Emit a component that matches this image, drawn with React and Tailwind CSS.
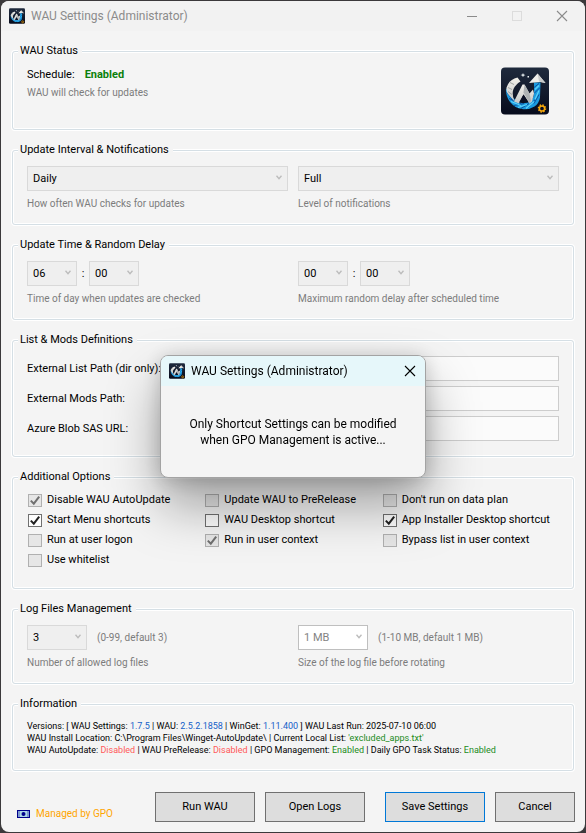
import React from "react";

function Logo({ className }) {
  return (
    <svg viewBox="0 0 48 47" className={className} aria-hidden="true">
      <defs>
        <linearGradient id="logoBg" x1="0" y1="0" x2="0" y2="1">
          <stop offset="0" stopColor="#1f2a3d" />
          <stop offset="1" stopColor="#070b1c" />
        </linearGradient>
        <linearGradient id="logoSilver" x1="0" y1="0" x2="0" y2="1">
          <stop offset="0" stopColor="#f1efea" />
          <stop offset="1" stopColor="#c6c8c8" />
        </linearGradient>
      </defs>
      <rect width="48" height="47" rx="4" fill="url(#logoBg)" />
      <path d="M33 15 L39.500 15 L39 30 Q38 36 33.500 39 Q28 42.500 21 41.500 Q14 40.500 9.500 35 Q4.500 29 5 21 L9 26 Q13 33 19 35 Q25 37 30 33 Q33 30 33 24 Z" fill="#1b9be0" />
      <path d="M6 25 L13 34 M8 31 L20 36 M13 38 L23 36 M20 41 L28 36 M27 40 L35 31 M33 36 L38 27 M33 26 L39 20 M33 20 L38 16" stroke="#0b4f9c" strokeWidth="1" fill="none" />
      <path d="M6 22 L12 31 M10 34 L20 38 M17 40 L26 37 M25 41 L33 34 M34 32 L38 23 M34 22 L38 18" stroke="#5cd3fa" strokeWidth="1.200" fill="none" />
      <path d="M16.500 10 Q8 12 5.500 20 Q5 24 7 26.500 L13.500 34 Q10.500 26 12.500 21.500 Q14.500 17 19.500 14 Z" fill="url(#logoSilver)" />
      <path d="M7 20 L11 22 M9 15 L13 17 M7 24 L11 27" stroke="#8d9396" strokeWidth="0.800" />
      <path d="M13 34 L21.500 17 L23.500 17 L28.500 26 L32 22 L33 26 L31 34 L28.500 36 L22.500 27 L18 36 Z" fill="url(#logoSilver)" />
      <path d="M23.500 17 L28.500 26 L30 33 L28.500 36 L22.500 25 Z" fill="#aeb2b4" />
      <path d="M22.500 27 L27.500 35 L18 35 Z" fill="#0a1024" />
      <path d="M36.500 6 L44.500 15.500 L39 14.500 L33.500 15 L28 15.500 Z" fill="#efeeea" />
      <path d="M36.500 6 L44.500 15.500 L38 14 Z" fill="#c9cbca" />
      <path d="M22 5.500 L22.700 7 L24.500 7.500 L22.700 8.200 L22 9.800 L21.300 8.200 L19.500 7.500 L21.300 7 Z M26.500 8.500 h1.500 v1.500 h-1.500 Z" fill="#e9eef0" />
      <circle cx="41" cy="41" r="3.500" fill="none" stroke="#f9a90a" strokeWidth="1.600" strokeDasharray="1.370 1.370" />
      <circle cx="41" cy="41" r="2.600" fill="none" stroke="#f9a90a" strokeWidth="1.500" />
    </svg>
  );
}

function CloseIcon({ className }) {
  return (
    <svg viewBox="0 0 12 12" className={className} fill="none" stroke="currentColor" strokeWidth="1.100" aria-hidden="true">
      <path d="M1 1 L11 11 M11 1 L1 11" />
    </svg>
  );
}

function Group({ title, className, children }) {
  return (
    <fieldset
      className={`min-w-0 rounded-[3px] border border-[#d5dfe5] px-[14px] shadow-[0_0_0_1px_#ffffff,inset_0_0_0_1px_#ffffff] ${className}`}
    >
      <legend className="-ml-[9px] h-4 bg-[#f4f4f4] pr-1 pl-[2px] leading-4">{title}</legend>
      {children}
    </fieldset>
  );
}

function Select({ label, value, className, active }) {
  return (
    <div className={`relative h-[25px] ${className}`}>
      <select
        aria-label={label}
        disabled
        defaultValue={value}
        className={`h-full w-full appearance-none border pl-[5px] leading-4 opacity-100 ${
          active ? "border-[#bfbfbf] bg-white text-[#838383]" : "border-[#d9d9d9] bg-[#efefef] text-black"
        }`}
      >
        <option>{value}</option>
      </select>
      <svg
        viewBox="0 0 6 5"
        className="pointer-events-none absolute top-[9px] right-[6px] h-[5px] w-[6px]"
        fill="none"
        stroke="#bcbcbc"
        strokeWidth="1.400"
        aria-hidden="true"
      >
        <path d="M0.500 0.700 L3 3.600 L5.500 0.700" />
      </svg>
    </div>
  );
}

function Hint({ children }) {
  return <p className="text-[10px] leading-[14px] text-[#7c7c7c]">{children}</p>;
}

function Check({ label, checked, enabled }) {
  return (
    <label className="flex h-5 items-center gap-[5px] pl-px whitespace-nowrap">
      <span className="relative h-[13px] w-[14px] shrink-0">
        <input
          type="checkbox"
          defaultChecked={checked}
          disabled={!enabled}
          className={`block h-full w-full appearance-none border ${
            enabled ? "border-[#707070] bg-white/80" : "border-[#6f6f6f]/45 bg-[#9a9a9a]/15"
          }`}
        />
        {checked && (
          <svg
            viewBox="0 0 14 13"
            className={`pointer-events-none absolute inset-0 h-full w-full ${enabled ? "text-[#212121]" : "text-[#707070]"}`}
            fill="none"
            stroke="currentColor"
            strokeWidth="2"
            aria-hidden="true"
          >
            <path d="M2.800 6.600 L5.800 9.700 L11.200 2.600" />
          </svg>
        )}
      </span>
      {label}
    </label>
  );
}

function PathField({ id, label }) {
  return (
    <div className="flex h-[25px] items-center">
      <label htmlFor={id} className="w-[140px] shrink-0 whitespace-nowrap">
        {label}
      </label>
      <input id={id} type="text" disabled className="h-full min-w-0 flex-1 border border-[#cdcdcd] bg-[#fbfbfb] px-1" />
    </div>
  );
}

function PushButton({ children, className }) {
  return (
    <button type="button" className={`h-[30px] border bg-[#dddddd] text-center ${className}`}>
      {children}
    </button>
  );
}

const Blue = ({ children }) => <span className="text-[#1560c8]">{children}</span>;
const Red = ({ children }) => <span className="text-[#ff5a5a]">{children}</span>;
const Green = ({ children }) => <span className="text-[#228b22]">{children}</span>;

export default function App() {
  return (
    <div className="min-h-screen bg-[#3b393b] p-px font-[Roboto,'Open_Sans',sans-serif] text-[11px] leading-4 text-black">
      <main className="overflow-hidden rounded-lg bg-[#f4f4f4]">
        <header className="flex h-[30px] items-center bg-[#f2f2f2] pl-2 text-[#8b8b8b]">
          <Logo className="h-4 w-4" />
          <h1 className="ml-[6px] flex-1 text-xs">WAU Settings (Administrator)</h1>
          <button type="button" aria-label="Minimize" className="flex w-[45px] justify-center">
            <span className="h-px w-[10px] bg-[#8b8b8b]" />
          </button>
          <button type="button" aria-label="Maximize" disabled className="flex w-[45px] justify-center">
            <span className="h-[10px] w-[10px] border border-[#dcdcdc]" />
          </button>
          <button type="button" aria-label="Close" className="flex w-[46px] justify-center">
            <CloseIcon className="h-3 w-3" />
          </button>
        </header>

        <div className="flex flex-col gap-3 px-[11px] pt-3">
          <Group title="WAU Status" className="pb-[14px]">
            <div className="flex justify-between pt-2 pr-[10px]">
              <div>
                <p className="flex gap-[10px]">
                  Schedule: <b className="font-bold text-[#0a800a]">Enabled</b>
                </p>
                <div className="pt-[3px]">
                  <Hint>WAU will check for updates</Hint>
                </div>
              </div>
              <Logo className="h-12 w-12" />
            </div>
          </Group>

          <Group title="Update Interval & Notifications" className="pb-[13px]">
            <div className="grid grid-cols-2 gap-[10px] pt-2">
              <div className="flex flex-col gap-[6px]">
                <Select label="Update interval" value="Daily" className="w-full" />
                <Hint>How often WAU checks for updates</Hint>
              </div>
              <div className="flex flex-col gap-[6px]">
                <Select label="Notification level" value="Full" className="w-full" />
                <Hint>Level of notifications</Hint>
              </div>
            </div>
          </Group>

          <Group title="Update Time & Random Delay" className="pb-[13px]">
            <div className="grid grid-cols-2 gap-[10px] pt-2">
              <div className="flex flex-col gap-[6px]">
                <div className="flex items-center">
                  <Select label="Update hour" value="06" className="w-[50px]" />
                  <span className="w-3 text-center">:</span>
                  <Select label="Update minute" value="00" className="w-[50px]" />
                </div>
                <Hint>Time of day when updates are checked</Hint>
              </div>
              <div className="flex flex-col gap-[6px]">
                <div className="flex items-center">
                  <Select label="Delay hours" value="00" className="w-[50px]" />
                  <span className="w-3 text-center">:</span>
                  <Select label="Delay minutes" value="00" className="w-[50px]" />
                </div>
                <Hint>Maximum random delay after scheduled time</Hint>
              </div>
            </div>
          </Group>

          <Group title="List & Mods Definitions" className="pb-[15px]">
            <div className="flex flex-col gap-[5px] pt-2">
              <PathField id="list-path" label="External List Path (dir only):" />
              <PathField id="mods-path" label="External Mods Path:" />
              <PathField id="blob-url" label="Azure Blob SAS URL:" />
            </div>
          </Group>

          <Group title="Additional Options" className="pb-[18px]">
            <div className="grid grid-cols-3 pt-[5px]">
              <Check label="Disable WAU AutoUpdate" checked />
              <Check label="Update WAU to PreRelease" />
              <Check label="Don't run on data plan" />
              <Check label="Start Menu shortcuts" checked enabled />
              <Check label="WAU Desktop shortcut" enabled />
              <Check label="App Installer Desktop shortcut" checked enabled />
              <Check label="Run at user logon" />
              <Check label="Run in user context" checked />
              <Check label="Bypass list in user context" />
              <Check label="Use whitelist" />
            </div>
          </Group>

          <Group title="Log Files Management" className="pb-[13px]">
            <div className="grid grid-cols-2 gap-[10px] pt-2">
              <div className="flex flex-col gap-[6px]">
                <div className="flex items-center gap-[10px]">
                  <Select label="Number of log files" value="3" className="w-[60px]" />
                  <Hint>(0-99, default 3)</Hint>
                </div>
                <Hint>Number of allowed log files</Hint>
              </div>
              <div className="flex flex-col gap-[6px]">
                <div className="flex items-center gap-[10px]">
                  <Select label="Log file size" value="1 MB" className="w-[70px]" active />
                  <Hint>(1-10 MB, default 1 MB)</Hint>
                </div>
                <Hint>Size of the log file before rotating</Hint>
              </div>
            </div>
          </Group>

          <Group title="Information" className="pb-[14px]">
            <div className="pt-2 text-[9px] leading-3 whitespace-nowrap">
              <p>
                Versions: [ WAU Settings: <Blue>1.7.5</Blue> | WAU: <Blue>2.5.2.1858</Blue> | WinGet: <Blue>1.11.400</Blue> ] WAU Last Run: 2025-07-10 06:00
              </p>
              <p>
                WAU Install Location: C:\Program Files\Winget-AutoUpdate\ | Current Local List: <Green>'excluded_apps.txt'</Green>
              </p>
              <p>
                WAU AutoUpdate: <Red>Disabled</Red> | WAU PreRelease: <Red>Disabled</Red> | GPO Management: <Green>Enabled</Green> | Daily GPO Task Status: <Green>Enabled</Green>
              </p>
            </div>
          </Group>
        </div>

        <footer className="flex items-end justify-between pt-[21px] pr-[10px] pb-[10px] pl-4">
          <p className="flex items-center gap-[6px] text-[10px] text-[#ffa500]">
            <svg viewBox="0 0 13 8" className="h-2 w-[13px]" aria-hidden="true">
              <rect x="0.500" y="0.500" width="12" height="7" fill="#add8e6" stroke="#00008b" />
              <path d="M1 1 h2 v6 h-2 Z M10 1 h2 v6 h-2 Z" fill="#7d9ad0" />
              <circle cx="6.500" cy="4" r="2" fill="#00008b" />
            </svg>
            Managed by GPO
          </p>
          <div className="flex gap-[10px]">
            <PushButton className="w-[100px] border-[#707070]">Run WAU</PushButton>
            <PushButton className="w-[100px] border-[#707070]">Open Logs</PushButton>
            <PushButton className="ml-[10px] w-[100px] border-[#0078d7]">Save Settings</PushButton>
            <PushButton className="w-[80px] border-[#707070]">Cancel</PushButton>
          </div>
        </footer>
      </main>

      <div className="fixed inset-0 flex items-center justify-center">
        <section
          role="dialog"
          aria-label="WAU Settings (Administrator)"
          className="w-[266px] overflow-hidden rounded-lg border border-[#a3a3a3] bg-[#f4f4f4] shadow-[0_28px_52px_rgba(0,0,0,0.34),0_2px_20px_rgba(0,0,0,0.18)]"
        >
          <header className="flex h-[30px] items-center bg-[#e6f7fa] pr-[9px] pl-2">
            <Logo className="h-4 w-4" />
            <h2 className="ml-[6px] flex-1 text-xs">WAU Settings (Administrator)</h2>
            <button type="button" aria-label="Close dialog">
              <CloseIcon className="h-3 w-3" />
            </button>
          </header>
          <p className="px-5 pt-[30px] pb-[29px] text-center text-xs leading-4">
            Only Shortcut Settings can be modified
            <br />
            when GPO Management is active...
          </p>
        </section>
      </div>
    </div>
  );
}
